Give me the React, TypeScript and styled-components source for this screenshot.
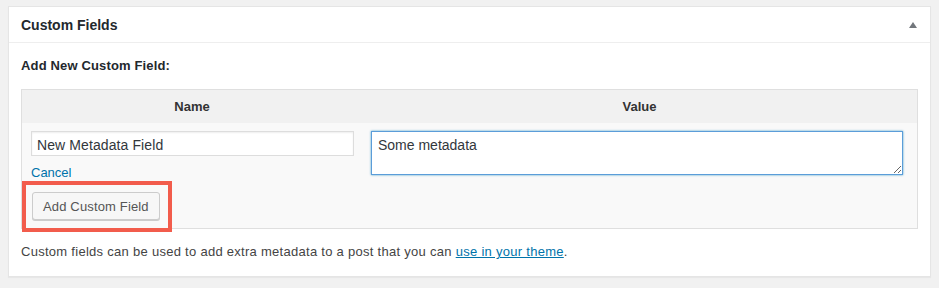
import styled, { createGlobalStyle } from "styled-components";

const GlobalStyle = createGlobalStyle`
  html, body {
    margin: 0;
    padding: 0;
    background: #f1f1f1;
  }
  body {
    font-family: "Liberation Sans", Arial, sans-serif;
    font-size: 13px;
    color: #444;
  }
`;

export default function App() {
  return (
    <>
      <GlobalStyle />
      <Page>
        <Postbox>
          <Header>
            <Title>Custom Fields</Title>
            <ToggleArrow aria-hidden="true" />
          </Header>
          <Inside>
            <Label>Add New Custom Field:</Label>
            <MetaTable>
              <thead>
                <tr>
                  <HeadCell $width="38%">Name</HeadCell>
                  <HeadCell>Value</HeadCell>
                </tr>
              </thead>
              <tbody>
                <tr>
                  <NameCell>
                    <TextInput type="text" defaultValue="New Metadata Field" />
                    <CancelLink href="#">Cancel</CancelLink>
                    <ButtonWrap>
                      <Highlight />
                      <Button type="button">Add Custom Field</Button>
                    </ButtonWrap>
                  </NameCell>
                  <ValueCell>
                    <TextArea
                      rows={2}
                      defaultValue="Some metadata"
                      autoFocus
                      onFocus={(e) => {
                        const len = e.currentTarget.value.length;
                        e.currentTarget.setSelectionRange(len, len);
                      }}
                    />
                  </ValueCell>
                </tr>
              </tbody>
            </MetaTable>
            <Note>
              Custom fields can be used to add extra metadata to a post that you
              can <NoteLink href="#">use in your theme</NoteLink>.
            </Note>
          </Inside>
        </Postbox>
      </Page>
    </>
  );
}

const Page = styled.div`
  padding: 6px 8px 12px;
`;

const Postbox = styled.div`
  width: 921px;
  background: #fff;
  border: 1px solid #e5e5e5;
  box-shadow: 0 1px 1px rgba(0, 0, 0, 0.04);
`;

const Header = styled.div`
  height: 35px;
  padding: 0 12px;
  display: flex;
  align-items: center;
  justify-content: space-between;
  border-bottom: 1px solid #eee;
`;

const Title = styled.h2`
  margin: 0;
  font-size: 14px;
  font-weight: 700;
  color: #23282d;
`;

const ToggleArrow = styled.span`
  width: 0;
  height: 0;
  margin-right: 1px;
  border-left: 4px solid transparent;
  border-right: 4px solid transparent;
  border-bottom: 6px solid #72777c;
`;

const Inside = styled.div`
  padding: 14px 12px 15px;
`;

const Label = styled.p`
  margin: 0 0 14px;
  line-height: 18px;
  font-weight: 700;
  letter-spacing: 0.15px;
  color: #23282d;
`;

const MetaTable = styled.table`
  width: 100%;
  border-collapse: collapse;
  border: 1px solid #dfdfdf;
  background: #f9f9f9;
`;

const HeadCell = styled.th<{ $width?: string }>`
  width: ${(p) => p.$width ?? "auto"};
  height: 33px;
  padding: 0;
  background: #f1f1f1;
  font-weight: 700;
  color: #333;
  text-align: center;
`;

const NameCell = styled.td`
  vertical-align: top;
  padding: 8px 8px 8px 9px;
`;

const ValueCell = styled.td`
  vertical-align: top;
  padding: 8px 14px 8px 9px;
`;

const TextInput = styled.input`
  display: block;
  box-sizing: border-box;
  width: 100%;
  height: 25px;
  margin: 0;
  padding: 3px 5px 1px;
  border: 1px solid #ddd;
  border-radius: 0;
  box-shadow: inset 0 1px 2px rgba(0, 0, 0, 0.07);
  background: #fff;
  font-family: inherit;
  font-size: 14px;
  letter-spacing: 0.1px;
  color: #32373c;
  outline: none;
`;

const TextArea = styled.textarea`
  display: block;
  box-sizing: border-box;
  width: 100%;
  height: 44px;
  margin: 0;
  padding: 4px 6px 2px;
  border: 1px solid #5b9dd9;
  border-radius: 0;
  box-shadow: 0 0 2px rgba(30, 140, 190, 0.8);
  background: #fff;
  font-family: inherit;
  font-size: 14px;
  line-height: 18px;
  color: #32373c;
  caret-color: #000;
  outline: none;
`;

const CancelLink = styled.a`
  display: block;
  margin-top: 8px;
  line-height: 18px;
  color: #0073aa;
  text-decoration: none;
`;

const ButtonWrap = styled.div`
  position: relative;
  display: inline-block;
  margin: 10px 0 0 1px;
`;

const Highlight = styled.span`
  position: absolute;
  top: -11px;
  left: -10px;
  right: -12px;
  bottom: -12px;
  border: 4px solid #f25c4c;
  pointer-events: none;
`;

const Button = styled.button`
  display: block;
  height: 28px;
  padding: 0 10px;
  border: 1px solid #ccc;
  border-radius: 3px;
  background: #f7f7f7;
  box-shadow: 0 1px 0 #ccc;
  font-family: inherit;
  font-size: 13px;
  letter-spacing: 0.15px;
  color: #555;
  cursor: pointer;
`;

const Note = styled.p`
  margin: 14px 0 0;
  line-height: 18px;
  letter-spacing: 0.28px;
  color: #444;
`;

const NoteLink = styled.a`
  color: #0073aa;
  text-decoration: underline;
`;
